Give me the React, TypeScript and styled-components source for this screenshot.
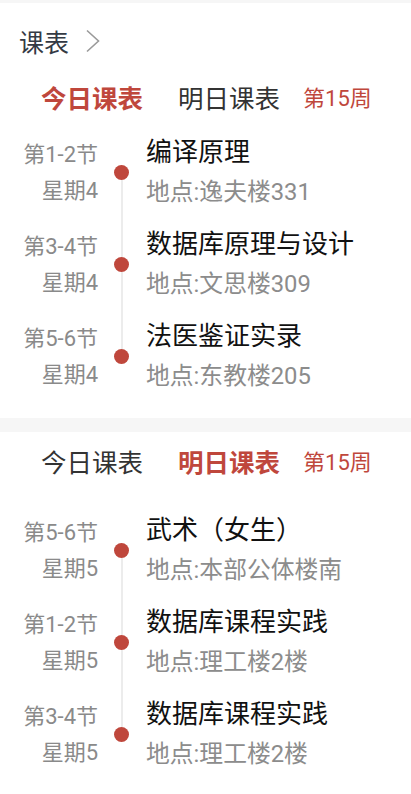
import React from "react";
import styled, { createGlobalStyle } from "styled-components";

type Course = {
  section: string;
  weekday: string;
  name: string;
  place: string;
};

const today: Course[] = [
  { section: "第1-2节", weekday: "星期4", name: "编译原理", place: "地点:逸夫楼331" },
  { section: "第3-4节", weekday: "星期4", name: "数据库原理与设计", place: "地点:文思楼309" },
  { section: "第5-6节", weekday: "星期4", name: "法医鉴证实录", place: "地点:东教楼205" },
];

const tomorrow: Course[] = [
  { section: "第5-6节", weekday: "星期5", name: "武术（女生）", place: "地点:本部公体楼南" },
  { section: "第1-2节", weekday: "星期5", name: "数据库课程实践", place: "地点:理工楼2楼" },
  { section: "第3-4节", weekday: "星期5", name: "数据库课程实践", place: "地点:理工楼2楼" },
];

const RED = "#bf473c";

const GlobalStyle = createGlobalStyle`
  body {
    margin: 0;
    background: #ffffff;
    font-family: Roboto, "Noto Sans CJK SC", sans-serif;
  }
`;

const Timeline = ({ courses }: { courses: Course[] }) => (
  <List>
    {courses.map((c, i) => (
      <Item key={i}>
        <When>
          <span>{c.section}</span>
          <span>{c.weekday}</span>
        </When>
        <Rail>
          <Segment $off={i === 0} $top />
          <Dot />
          <Segment $off={i === courses.length - 1} />
        </Rail>
        <Info>
          <Title>{c.name}</Title>
          <Place>{c.place}</Place>
        </Info>
      </Item>
    ))}
  </List>
);

const Tabs = ({ active }: { active: 0 | 1 }) => (
  <TabRow>
    <Tab $active={active === 0}>今日课表</Tab>
    <Tab $active={active === 1}>明日课表</Tab>
    <Week>第15周</Week>
  </TabRow>
);

const App = () => (
  <Page>
    <GlobalStyle />
    <Band $thin />
    <Card>
      <Header>
        <span>课表</span>
        <svg width="16" height="24" viewBox="0 0 16 24">
          <polyline points="2,1.5 13.5,12 2,22.5" fill="none" stroke="#9a9a9a" strokeWidth="1.6" />
        </svg>
      </Header>
      <Tabs active={0} />
      <Spacer $h={19} />
      <Timeline courses={today} />
    </Card>
    <Band />
    <Card $top={11}>
      <Tabs active={1} />
      <Spacer $h={33} />
      <Timeline courses={tomorrow} />
    </Card>
  </Page>
);

export default App;

const Page = styled.div`
  width: 411px;
  min-height: 794px;
  background: #fff;
`;

const Band = styled.div<{ $thin?: boolean }>`
  height: ${({ $thin }) => ($thin ? "3px" : "14px")};
  background: #f6f6f6;
`;

const Card = styled.div<{ $top?: number }>`
  padding-top: ${({ $top }) => $top || 0}px;
  padding-bottom: 10px;
  background: #fff;
`;

const Header = styled.div`
  height: 76px;
  display: flex;
  align-items: center;
  gap: 16px;
  padding-left: 19px;
  font-size: 25px;
  color: #343a44;
`;

const TabRow = styled.div`
  height: 34px;
  display: flex;
  align-items: center;
  padding-left: 41px;
`;

const Tab = styled.span<{ $active?: boolean }>`
  font-size: 25.5px;
  margin-right: 35px;
  font-weight: ${({ $active }) => ($active ? 700 : 400)};
  color: ${({ $active }) => ($active ? RED : "#333")};
  &:nth-child(2) {
    margin-right: 23px;
  }
`;

const Week = styled.span`
  font-size: 22px;
  color: ${RED};
`;

const Spacer = styled.div<{ $h: number }>`
  height: ${({ $h }) => $h}px;
`;

const List = styled.div`
  display: flex;
  flex-direction: column;
`;

const Item = styled.div`
  height: 92px;
  display: flex;
`;

const When = styled.div`
  width: 98px;
  padding-top: 5px;
  display: flex;
  flex-direction: column;
  align-items: flex-end;
  font-size: 22px;
  line-height: 36px;
  color: #8a8a8a;
`;

const Rail = styled.div`
  width: 47px;
  display: flex;
  flex-direction: column;
  align-items: center;
`;

const Segment = styled.div<{ $off?: boolean; $top?: boolean }>`
  ${({ $top }) => ($top ? "height: 33px;" : "flex: 1;")}
  width: 2px;
  background: ${({ $off }) => ($off ? "transparent" : "#ececec")};
`;

const Dot = styled.div`
  width: 15px;
  height: 15px;
  flex-shrink: 0;
  border-radius: 50%;
  background: ${RED};
`;

const Info = styled.div`
  display: flex;
  flex-direction: column;
  padding-left: 1px;
`;

const Title = styled.div`
  font-size: 26px;
  line-height: 40px;
  color: #111;
`;

const Place = styled.div`
  font-size: 23.8px;
  line-height: 40px;
  color: #8c8c8c;
`;
